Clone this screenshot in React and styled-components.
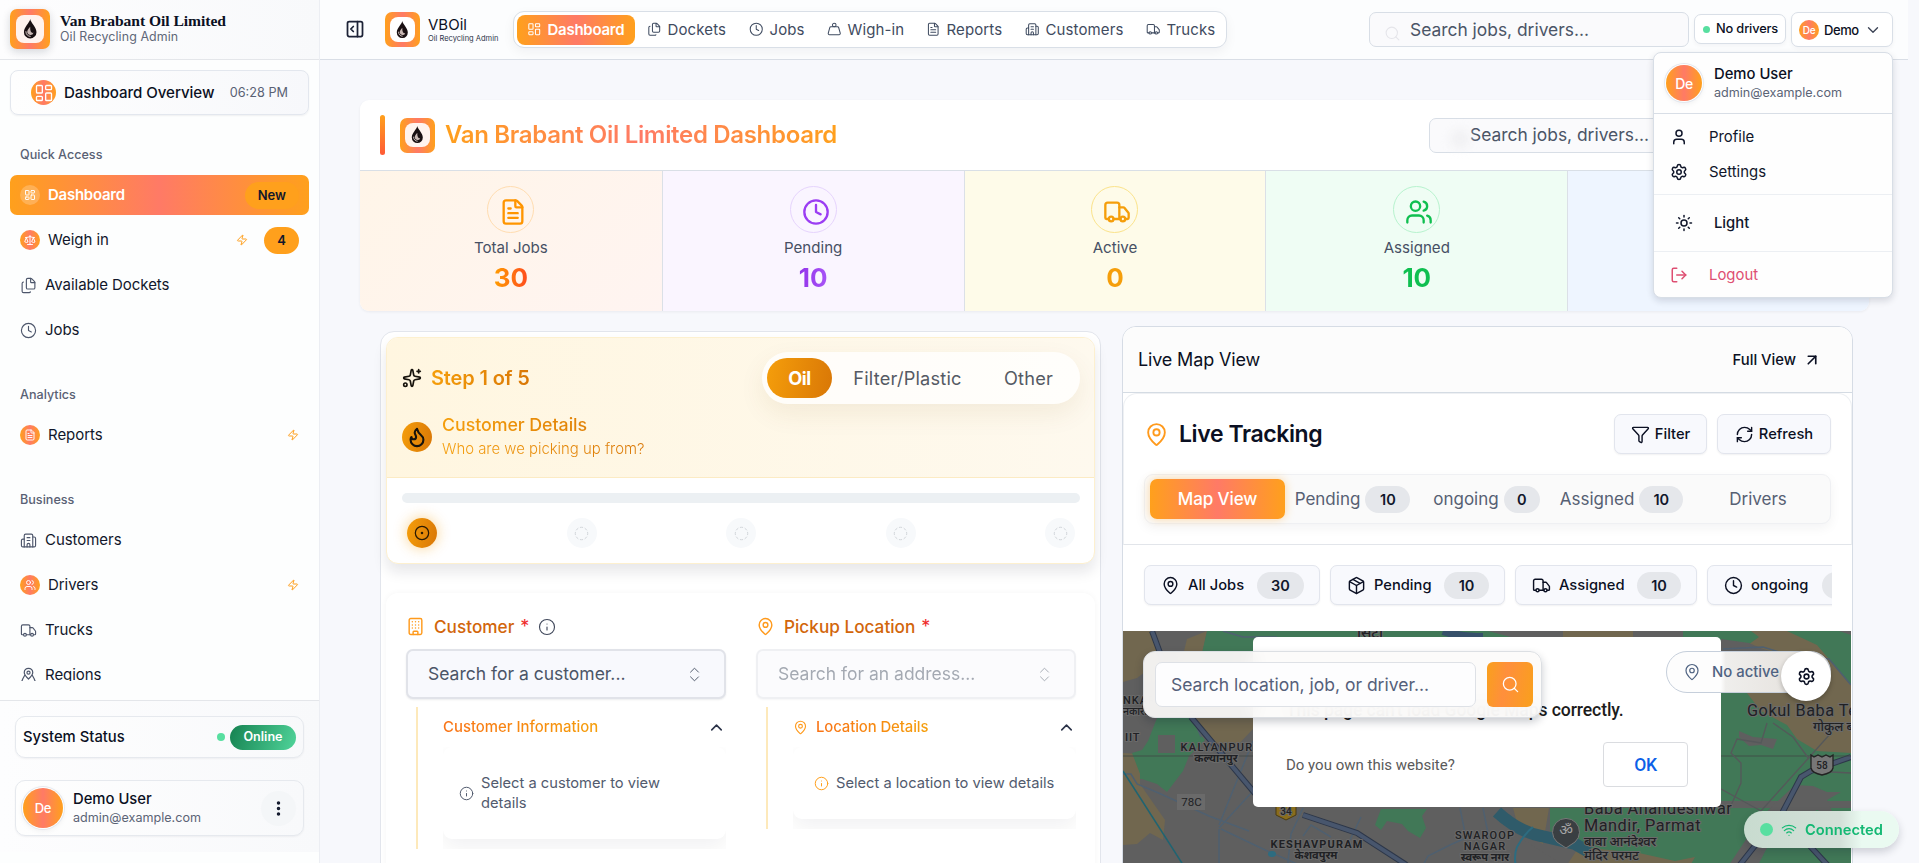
import React from 'react';
import styled, { createGlobalStyle } from 'styled-components';
import {
  LayoutDashboard, Files, Clock, Weight, FileText, Building2, Building, Truck, Users, Zap, Scale,
  PanelRightOpen, Search, ChevronDown, ChevronUp, ChevronsUpDown, User, Settings, Sun, LogOut,
  EllipsisVertical, Sparkles, Flame, CircleDashed, CircleDot, Info, MapPin, Funnel, RefreshCw,
  Package, ArrowUpRight, Wifi,
} from 'lucide-react';

const warm = 'linear-gradient(90deg, #ffa01c 0%, #ff7a66 50%, #ffa01c 100%)';
const amber = 'linear-gradient(100deg, #f59e0b, #d97706)';
const amberText = 'linear-gradient(90deg, #f59e0b, #d97706)';

const Global = createGlobalStyle`
  *, *::before, *::after { box-sizing: border-box; }
  body { margin: 0; background: #f7f8fc; font-family: Inter, 'Noto Sans', sans-serif; color: #0b1023; overflow: hidden; }
  svg { display: block; flex: none; }
`;

const Page = styled.div`
  display: grid;
  grid-template-columns: 320px 1fr;
  height: 863px;
  overflow: hidden;
`;

const Text = styled.span`
  white-space: nowrap;
  font-size: ${p => p.$size || 15}px;
  font-weight: ${p => p.$weight || 400};
  letter-spacing: ${p => p.$ls || 0}px;
  color: ${p => p.$color || 'inherit'};
  line-height: ${p => p.$lh || 20}px;
`;

const GradientText = styled(Text)`
  background: ${p => p.$fill || warm};
  -webkit-background-clip: text;
  background-clip: text;
  color: transparent;
`;

/* Logo */
const LogoFrame = styled.div`
  display: grid;
  place-items: center;
  width: ${p => p.$size}px;
  height: ${p => p.$size}px;
  flex: none;
  border-radius: 7px;
  background: ${warm};
  box-shadow: ${p => (p.$raised ? '0 3px 8px rgba(15, 23, 42, .16)' : 'none')};
`;
const LogoInner = styled.div`
  display: grid;
  place-items: center;
  width: 70%;
  height: 70%;
  border-radius: 8px;
  background: ${p => p.$tint || '#fff3ee'};
`;
function Logo({ size, raised, tint }) {
  return (
    <LogoFrame $size={size} $raised={raised}>
      <LogoInner $tint={tint}>
        <svg width={size * 0.36} height={size * 0.5} viewBox="0 0 16 22">
          <path d="M8 0C7.500 4 1 9 1 14.500a7 7 0 0 0 14 0C15 9 8.500 4 8 0z" fill="#1a1012" />
          <path d="M8 8.500c-2 2.400-3.300 4-3.300 6a3.600 3.600 0 0 0 7 .8c-2.200.8-4-1.500-3.700-6.800z" fill="#c9b8b4" />
          <path d="M3.200 13.500c0 3.500 2.300 5.700 5.300 5.700" stroke="#e8dad6" strokeWidth="1" fill="none" />
        </svg>
      </LogoInner>
    </LogoFrame>
  );
}

/* Sidebar */
const Sidebar = styled.aside`
  display: flex;
  flex-direction: column;
  height: 863px;
  padding-bottom: 11px;
  background: #fdfefe;
  border-right: 1px solid #eceef3;
`;
const Brand = styled.div`
  display: flex;
  align-items: center;
  gap: 10px;
  height: 60px;
  padding: 0 10px 2px;
  background: linear-gradient(90deg, #fdfdfe, #f8f9fb);
  border-bottom: 1px solid #e4e6ea;
`;
const BrandText = styled.div`
  display: flex;
  flex-direction: column;
`;
const BrandName = styled.span`
  font: 700 15.6px/16px 'Liberation Serif', serif;
  letter-spacing: -0.05px;
  white-space: nowrap;
`;
const Overview = styled.div`
  display: flex;
  align-items: center;
  height: 45px;
  margin: 10px 10px 0;
  padding: 0 20px;
  gap: 8px;
  border: 1px solid #e3e7ee;
  border-radius: 8px;
  background: linear-gradient(90deg, #fefefe, #f7f8fb);
  box-shadow: 0 1px 2px rgba(15, 23, 42, .06);
`;
const Disc = styled.span`
  display: grid;
  place-items: center;
  flex: none;
  width: ${p => p.$size}px;
  height: ${p => p.$size}px;
  border-radius: 50%;
  color: #fff;
  background: ${p => p.$bg || warm};
  font-size: ${p => p.$font || 12}px;
  font-weight: 500;
  letter-spacing: -0.3px;
  box-shadow: ${p => (p.$ring ? '0 0 0 1px #fff, 0 0 0 2px #e5e9ef, 0 2px 6px rgba(15,23,42,.08)' : 'none')};
`;
const Time = styled(Text)`margin-left: auto;`;
const NavScroll = styled.nav`
  flex: none;
  height: 566px;
  overflow: hidden;
`;
const NavGroup = styled.div`
  display: flex;
  flex-direction: column;
  gap: 5px;
  padding: 30px 10px 5px;
`;
const NavTitle = styled.div`
  margin: 0 10px 5px;
  font-size: 12.6px;
  line-height: 20px;
  font-weight: 500;
  color: #596174;
`;
const NavItem = styled.div`
  display: flex;
  align-items: center;
  gap: 8px;
  height: 40px;
  padding: 0 10px;
  border-radius: 7px;
  background: ${p => (p.$active ? warm : 'transparent')};
  color: ${p => (p.$active ? '#fff' : '#11172b')};
  & > svg { color: #4d566b; }
`;
const NavEnd = styled.span`
  display: flex;
  align-items: center;
  gap: 16px;
  margin-left: auto;
  color: #ff9f1c;
`;
const NavBadge = styled.span`
  display: grid;
  place-items: center;
  height: 27px;
  padding: 0 13px;
  border-radius: 14px;
  background: #ffa01c;
  color: #11172b;
  font-size: 13px;
  font-weight: 600;
`;
const SideFooter = styled.div`
  display: flex;
  flex-direction: column;
  gap: 22px;
  height: 152px;
  margin-top: auto;
  padding: 15px 15px 0;
  border-top: 1px solid #e4e6ea;
  background: linear-gradient(90deg, #fdfdfe, #f8f9fb);
`;
const StatusCard = styled.div`
  display: flex;
  align-items: center;
  height: ${p => p.$h}px;
  padding: 0 7px;
  border: 1px solid #e6e9ee;
  border-radius: 10px;
  background: linear-gradient(90deg, #fefefe, #f8f9fb);
  box-shadow: 0 1px 2px rgba(15, 23, 42, .05);
`;
const Dot = styled.span`
  flex: none;
  width: ${p => p.$size}px;
  height: ${p => p.$size}px;
  border-radius: 50%;
  background: #58dfa0;
`;
const OnlinePill = styled.span`
  display: grid;
  place-items: center;
  width: 66px;
  height: 25px;
  padding-bottom: 2px;
  border-radius: 13px;
  background: linear-gradient(110deg, #168251, #50d49a);
  color: #fff;
  font-size: 12.6px;
  font-weight: 600;
`;
const StatusEnd = styled.span`
  display: flex;
  align-items: center;
  gap: 5px;
  margin-left: auto;
`;
const UserLines = styled.span`
  display: flex;
  flex-direction: column;
  margin-left: ${p => p.$ml}px;
`;

function RegionIcon() {
  return (
    <svg width="17" height="17" viewBox="0 0 24 24" fill="none" stroke="currentColor" strokeWidth="1.700" strokeLinecap="round" strokeLinejoin="round">
      <path d="M12 17c4-3.800 6-6 6-9.200a6 6 0 0 0-12 0C6 11 8 13.200 12 17z" />
      <circle cx="12" cy="8" r="2.200" />
      <path d="M6.500 12 4 16.500 1.500 23M17.500 12l2.500 4.500L22.500 23" />
    </svg>
  );
}

const sections = [
  ['Quick Access', [
    { label: 'Dashboard', icon: LayoutDashboard, disc: true, active: true, badge: 'New' },
    { label: 'Weigh in', icon: Scale, disc: true, zap: true, badge: '4' },
    { label: 'Available Dockets', icon: Files },
    { label: 'Jobs', icon: Clock },
  ]],
  ['Analytics', [{ label: 'Reports', icon: FileText, disc: true, zap: true }]],
  ['Business', [
    { label: 'Customers', icon: Building2 },
    { label: 'Drivers', icon: Users, disc: true, zap: true },
    { label: 'Trucks', icon: Truck },
    { label: 'Regions', icon: RegionIcon },
  ]],
];

function SideNav() {
  return (
    <NavScroll>
      {sections.map(([title, items]) => (
        <NavGroup key={title}>
          <NavTitle>{title}</NavTitle>
          {items.map(({ label, icon: Icon, disc, active, zap, badge }) => (
            <NavItem key={label} $active={active}>
              {disc
                ? <Disc $size={20} $bg={active ? 'rgba(255,255,255,.22)' : null}><Icon size={12} strokeWidth={1.9} /></Disc>
                : <Icon size={17} strokeWidth={1.6} />}
              <Text $size={15} $ls={active ? -0.25 : -0.05} $weight={active ? 600 : 400}>{label}</Text>
              <NavEnd>
                {zap && <Zap size={12} strokeWidth={2} />}
                {badge && <NavBadge>{badge}</NavBadge>}
              </NavEnd>
            </NavItem>
          ))}
        </NavGroup>
      ))}
    </NavScroll>
  );
}

/* Top bar */
const Main = styled.div`
  min-width: 0;
  height: 863px;
`;
const TopBar = styled.header`
  display: flex;
  align-items: flex-start;
  width: 1588px;
  height: 60px;
  padding: 11px 15px 0 25px;
  background: #fcfdfe;
  border-bottom: 1px solid #d9dee6;
`;
const ToggleSlot = styled.div`
  width: 40px;
  padding-top: 8px;
  color: #1c2236;
`;
const MiniBrand = styled.div`
  display: flex;
  gap: 8px;
  width: 128px;
  padding-top: 1px;
`;
const Tabs = styled.div`
  display: flex;
  gap: 1px;
  width: 714px;
  height: 37px;
  padding: 3px;
  border: 1px solid #d9dfe7;
  border-radius: 11px;
  background: #fff;
  box-shadow: 0 4px 12px rgba(15, 23, 42, .05);
`;
const Tab = styled.div`
  display: flex;
  align-items: center;
  gap: 6px;
  flex: none;
  width: ${p => p.$w}px;
  height: 30px;
  margin-right: ${p => (p.$active ? 1 : 0)}px;
  padding: 0 0 1px 10px;
  border-radius: 8px;
  background: ${p => (p.$active ? warm : 'none')};
  color: ${p => (p.$active ? '#fff' : '#3f4b60')};
`;
const SearchBox = styled.div`
  display: flex;
  align-items: center;
  width: 320px;
  height: 35px;
  flex: none;
  padding-left: ${p => p.$pad}px;
  border: 1px solid #d8dee6;
  border-radius: 7px;
  background: #fafafc;
  color: #4b5567;
`;
const TopSearch = styled(SearchBox)`
  margin: 1px 0 0 142px;
`;
const GhostIcon = styled.span`
  width: 26px;
  padding-top: 8px;
  color: #e5e5ea;
`;
const GhostSpot = styled.span`
  width: 20px;
  height: 20px;
  margin: 8px 0 0 -20px;
  border-radius: 50%;
  background: #f1f1f3;
  filter: blur(5px);
`;
const TopPill = styled.div`
  display: flex;
  align-items: center;
  gap: ${p => p.$gap}px;
  width: ${p => p.$w}px;
  height: ${p => p.$h}px;
  flex: none;
  margin: ${p => p.$m};
  padding-left: ${p => p.$pl}px;
  border: 1px solid #d9dfe7;
  border-radius: 7px;
  background: #fff;
  box-shadow: 0 2px 4px rgba(15, 23, 42, .04);
`;
const UserArea = styled.div`position: relative;`;
const Menu = styled.div`
  position: absolute;
  z-index: 20;
  right: 0;
  top: 41px;
  width: 240px;
  height: 246px;
  border: 1px solid #d8dee6;
  border-radius: 8px;
  background: #fefefe;
  box-shadow: 0 3px 7px rgba(15, 23, 42, .14);
`;
const MenuGroup = styled.div`
  display: flex;
  flex-direction: column;
  justify-content: center;
  height: ${p => p.$h}px;
  border-bottom: ${p => (p.$line ? `1px solid ${p.$line}` : 'none')};
`;
const MenuRow = styled.div`
  display: flex;
  align-items: center;
  height: 35px;
  gap: 21px;
  padding-left: ${p => p.$pl || 16}px;
  color: ${p => p.$color || '#11172b'};
`;
const MenuUser = styled.div`
  display: flex;
  align-items: center;
  padding-left: 12px;
`;

const topTabs = [
  ['Dashboard', LayoutDashboard, 118], ['Dockets', Files, 101], ['Jobs', Clock, 77], ['Wigh-in', Weight, 98],
  ['Reports', FileText, 98], ['Customers', Building2, 120], ['Trucks', Truck, 87],
];

function Header() {
  return (
    <TopBar>
      <ToggleSlot><PanelRightOpen size={20} strokeWidth={2.1} /></ToggleSlot>
      <MiniBrand>
        <Logo size={35} tint="#fff" />
        <BrandText>
          <Text $size={15} $lh={25}>VBOil</Text>
          <Text $size={7.5} $lh={3} $color="#2b3348">Oil Recycling Admin</Text>
        </BrandText>
      </MiniBrand>
      <Tabs>
        {topTabs.map(([label, Icon, w], i) => (
          <Tab key={label} $w={w} $active={i === 0}>
            <Icon size={14.5} strokeWidth={1.7} />
            <Text $size={15} $weight={i === 0 ? 600 : 400} $ls={i === 0 ? -0.25 : 0.12}>{label}</Text>
          </Tab>
        ))}
      </Tabs>
      <TopSearch $pad={14}>
        <GhostIcon><Search size={17} strokeWidth={1.5} /></GhostIcon>
        <Text $size={17.4}>Search jobs, drivers...</Text>
      </TopSearch>
      <TopPill $w={92} $h={30} $gap={6} $pl={8} $m="3px 5px 0 5px">
        <Dot $size={7} />
        <Text $size={12.8} $weight={500} $ls={-0.15}>No drivers</Text>
      </TopPill>
      <UserArea>
        <TopPill $w={102} $h={35} $gap={5} $pl={7} $m="1px 0 0 0">
          <Disc $size={20} $font={10}>De</Disc>
          <Text $size={13} $weight={500} $ls={-0.4}>Demo</Text>
          <ChevronDown size={18} strokeWidth={1.8} color="#3c4355" />
        </TopPill>
        <Menu>
          <MenuGroup $h={61} $line="#d8dee6">
            <MenuUser>
              <Disc $size={36} $font={14} $ring>De</Disc>
              <UserLines $ml={12}>
                <Text $size={14.8} $weight={500}>Demo User</Text>
                <Text $size={12.6} $color="#5b6476" $lh={18}>admin@example.com</Text>
              </UserLines>
            </MenuUser>
          </MenuGroup>
          <MenuGroup $h={81} $line="#eceff3">
            <MenuRow><User size={18} /><Text $size={14.9}>Profile</Text></MenuRow>
            <MenuRow><Settings size={18} /><Text $size={14.9}>Settings</Text></MenuRow>
          </MenuGroup>
          <MenuGroup $h={57} $line="#eceff3">
            <MenuRow $pl={21}><Sun size={18} /><Text $size={14.8} $weight={500}>Light</Text></MenuRow>
          </MenuGroup>
          <MenuGroup $h={46}>
            <MenuRow $color="#de4f72"><LogOut size={18} /><Text $size={14.9}>Logout</Text></MenuRow>
          </MenuGroup>
        </Menu>
      </UserArea>
    </TopBar>
  );
}

/* Summary panel */
const Summary = styled.section`
  width: 1509px;
  height: 211px;
  margin: 40px 0 0 40px;
  border-radius: 9px;
  overflow: hidden;
  background: #fff;
  box-shadow: 0 1px 3px rgba(15, 23, 42, .06);
`;
const SummaryHead = styled.div`
  display: flex;
  align-items: center;
  height: 71px;
  padding: 0 120px 0 20px;
  border-bottom: 1px solid #d9dfe6;
`;
const Accent = styled.span`
  width: 5px;
  height: 40px;
  margin-right: 15px;
  border-radius: 3px;
  background: linear-gradient(#ffa01c, #ff5a36);
`;
const SummaryTitle = styled(GradientText)`margin: 0 auto 0 10px;`;
const Stats = styled.div`
  display: grid;
  grid-template-columns: repeat(5, 1fr);
  height: 140px;
`;
const Stat = styled.div`
  display: flex;
  flex-direction: column;
  align-items: center;
  padding-top: 15px;
  background: ${p => p.$bg};
  border-left: ${p => (p.$first ? 'none' : '1px solid #dbe0e7')};
  color: ${p => p.$color};
`;
const StatRing = styled.span`
  display: grid;
  place-items: center;
  width: 47px;
  height: 47px;
  padding: 5px 0 0 5px;
  border: 1px solid ${p => p.$ring};
  border-radius: 50%;
`;
const stats = [
  ['Total Jobs', '30', FileText, 'linear-gradient(135deg,#fff5e8,#fff4f1)', '#ff9500', '#ffdcb0', 'linear-gradient(90deg,#ff9d00,#ff4b1e)'],
  ['Pending', '10', Clock, '#faf5ff', '#9b3df3', '#e6d4fd', 'linear-gradient(90deg,#9333ea,#a855f7)'],
  ['Active', '0', Truck, '#fefbe9', '#f59e0b', '#fbe38b', 'linear-gradient(90deg,#f59e0b,#f59e0b)'],
  ['Assigned', '10', Users, '#effdf4', '#0fbf50', '#b7f3ce', 'linear-gradient(90deg,#0fbf50,#0fbf50)'],
];

function SummaryPanel() {
  return (
    <Summary>
      <SummaryHead>
        <Accent />
        <Logo size={35} />
        <SummaryTitle $size={24} $weight={600} $ls={-0.32} $lh={30}>Van Brabant Oil Limited Dashboard</SummaryTitle>
        <SearchBox $pad={40}><GhostSpot /><Text $size={17.4}>Search jobs, drivers...</Text></SearchBox>
      </SummaryHead>
      <Stats>
        {stats.map(([label, n, Icon, bg, color, ring, fill], i) => (
          <Stat key={label} $bg={bg} $color={color} $first={i === 0}>
            <StatRing $ring={ring}><Icon size={28} strokeWidth={2} /></StatRing>
            <Text $size={15.1} $lh={30} $color="#475064">{label}</Text>
            <GradientText $size={26} $weight={700} $lh={30} $fill={fill}>{n}</GradientText>
          </Stat>
        ))}
        <Stat $bg="#eef5ff" />
      </Stats>
    </Summary>
  );
}

/* Pickup form */
const Columns = styled.div`
  display: flex;
  align-items: flex-start;
  gap: 21px;
  padding: 15px 0 0 60px;
`;
const FormCard = styled.section`
  width: 721px;
  height: 560px;
  margin-top: 5px;
  padding: 5px;
  border: 1px solid #e2e5ec;
  border-radius: 14px;
  background: #fff;
`;
const Stepper = styled.div`
  height: 227px;
  border: 1px solid #fdf0cf;
  border-radius: 12px;
  overflow: hidden;
  background: #fff;
  box-shadow: 0 8px 14px rgba(15, 23, 42, .10);
`;
const StepHead = styled.div`
  height: 140px;
  padding: 14px 14px 0 15px;
  border-bottom: 1px solid #fcebc4;
  background: linear-gradient(90deg, #fff6e0, #fef9ee);
`;
const Row = styled.div`
  display: flex;
  align-items: center;
  gap: ${p => p.$gap || 0}px;
`;
const Kinds = styled.div`
  display: flex;
  align-items: center;
  width: 318px;
  height: 52px;
  margin-left: auto;
  padding-left: 5px;
  border-radius: 26px;
  background: rgba(255, 255, 255, .75);
  box-shadow: 0 10px 26px rgba(120, 80, 0, .08);
`;
const Kind = styled.span`
  display: grid;
  place-items: center;
  width: ${p => p.$w}px;
  height: 40px;
  border-radius: 20px;
  font-size: 18.2px;
  font-weight: ${p => (p.$active ? 700 : 400)};
  letter-spacing: ${p => (p.$active ? -0.4 : 0.2)}px;
  color: ${p => (p.$active ? '#fff' : '#555a64')};
  background: ${p => (p.$active ? amber : 'none')};
`;
const StepInfo = styled.div`
  display: flex;
  align-items: center;
  gap: 10px;
  margin-top: 9px;
`;
const StepLines = styled.div`
  display: flex;
  flex-direction: column;
`;
const Progress = styled.div`
  height: 10px;
  margin: 15px 14px 0 15px;
  border-radius: 5px;
  background: #ecf0f3;
`;
const Steps = styled.div`
  display: flex;
  justify-content: space-between;
  padding: 15px 19px 0 20px;
`;
const Step = styled.span`
  display: grid;
  place-items: center;
  width: 30px;
  height: 30px;
  border-radius: 50%;
  color: ${p => (p.$active ? '#2b1a02' : '#d0d4d9')};
  background: ${p => (p.$active ? amber : '#f7f9fb')};
  box-shadow: ${p => (p.$active ? '0 0 14px rgba(245, 158, 11, .45)' : 'none')};
`;
const Fields = styled.div`
  display: grid;
  grid-template-columns: 320px 320px;
  gap: 30px;
  height: 300px;
  margin-top: 29px;
  padding: 22px 0 0 20px;
  border-radius: 12px;
  background: #fff;
  box-shadow: 0 0 6px rgba(15, 23, 42, .04);
`;
const FieldLabel = styled.div`
  display: flex;
  align-items: center;
  gap: 9px;
  height: 24px;
  padding-bottom: 1px;
  color: #ff9a1c;
`;
const Star = styled.span`
  color: #ef2b2b;
  font-size: 18px;
  margin-left: -3px;
`;
const Picker = styled.div`
  display: flex;
  align-items: center;
  justify-content: space-between;
  height: 50px;
  margin-top: 10px;
  padding: 0 20px;
  border: 2px solid #e1e3e9;
  border-radius: 7px;
  background: #f8f9fd;
  color: #4b5567;
  opacity: ${p => (p.$dim ? 0.5 : 1)};
  box-shadow: 0 1px 2px rgba(15, 23, 42, .08);
`;
const Details = styled.div`
  height: ${p => p.$h}px;
  margin: 8px 0 0 10px;
  padding-left: 25px;
  border-left: 2px solid #fde9bb;
`;
const DetailsHead = styled.div`
  display: flex;
  align-items: center;
  gap: 8px;
  height: 40px;
  color: #ff9a1c;
  & > :last-child { margin-left: auto; color: #2b3348; }
`;
const DetailsClip = styled.div`
  height: ${p => p.$h}px;
  overflow: hidden;
`;
const Hint = styled.div`
  display: flex;
  align-items: center;
  gap: 7px;
  height: ${p => p.$h}px;
  padding-left: ${p => p.$pl}px;
  border-radius: 9px;
  background: #fff;
  box-shadow: 0 8px 22px rgba(15, 23, 42, .06);
  font-size: 14.7px;
  line-height: 20px;
  color: #525b6e;
`;
const HintText = styled.span`
  width: ${p => p.$w}px;
`;

function PickupForm() {
  return (
    <FormCard>
      <Stepper>
        <StepHead>
          <Row $gap={9}>
            <Sparkles size={20} color="#17130c" />
            <GradientText $size={20} $weight={600} $fill={amberText} $ls={-0.15} $lh={26}>Step 1 of 5</GradientText>
            <Kinds>
              <Kind $w={65} $active>Oil</Kind>
              <Kind $w={151}>Filter/Plastic</Kind>
              <Kind $w={91}>Other</Kind>
            </Kinds>
          </Row>
          <StepInfo>
            <Disc $size={30} $bg={amber}><Flame size={22} color="#17130c" strokeWidth={2.3} /></Disc>
            <StepLines>
              <GradientText $size={17.8} $fill={amberText} $weight={500} $lh={24} $ls={-0.05}>Customer Details</GradientText>
              <GradientText $size={14.9} $fill={amberText} $weight={300} $lh={24}>Who are we picking up from?</GradientText>
            </StepLines>
          </StepInfo>
        </StepHead>
        <Progress />
        <Steps>
          <Step $active><CircleDot size={16} strokeWidth={1.9} /></Step>
          {[2, 3, 4, 5].map(n => <Step key={n}><CircleDashed size={15} strokeWidth={1.5} /></Step>)}
        </Steps>
      </Stepper>
      <Fields>
        <div>
          <FieldLabel>
            <Building size={19} strokeWidth={1.8} />
            <Text $size={17.2} $weight={500} $color="#d2660b">Customer</Text>
            <Star>*</Star>
            <Info size={18} color="#3f475a" strokeWidth={1.5} />
          </FieldLabel>
          <Picker><Text $size={17.5}>Search for a customer...</Text><ChevronsUpDown size={19} strokeWidth={1.2} /></Picker>
          <Details $h={142}>
            <DetailsHead>
              <GradientText $size={14.9} $weight={500} $ls={0} $fill="linear-gradient(90deg,#f97316,#f59e0b)">Customer Information</GradientText>
              <ChevronUp size={19} />
            </DetailsHead>
            <DetailsClip $h={102}>
              <Hint $h={92} $pl={16}><Info size={15} strokeWidth={1.6} /><HintText $w={200}>Select a customer to view details</HintText></Hint>
            </DetailsClip>
          </Details>
        </div>
        <div>
          <FieldLabel>
            <MapPin size={19} strokeWidth={1.8} />
            <Text $size={17.2} $weight={500} $color="#d2660b">Pickup Location</Text>
            <Star>*</Star>
          </FieldLabel>
          <Picker $dim><Text $size={17.5}>Search for an address...</Text><ChevronsUpDown size={19} strokeWidth={1.2} /></Picker>
          <Details $h={122}>
            <DetailsHead>
              <MapPin size={15} strokeWidth={1.8} />
              <GradientText $size={14.9} $weight={500} $ls={-0.1} $fill="linear-gradient(90deg,#f97316,#f59e0b)">Location Details</GradientText>
              <ChevronUp size={19} />
            </DetailsHead>
            <DetailsClip $h={82}>
              <Hint $h={72} $pl={21}><Info size={15} strokeWidth={1.6} color="#ffa01c" /><HintText $w={230}>Select a location to view details</HintText></Hint>
            </DetailsClip>
          </Details>
        </div>
      </Fields>
    </FormCard>
  );
}

/* Live map */
const MapCard = styled.section`
  width: 731px;
  height: 560px;
  border: 1px solid #d6dce5;
  border-radius: 14px;
  overflow: hidden;
  background: #fff;
`;
const MapHead = styled.div`
  display: flex;
  align-items: center;
  justify-content: space-between;
  height: 66px;
  padding: 0 31px 0 15px;
  border-bottom: 1px solid #d4dbe3;
  background: #fcfcfc;
`;
const Tracking = styled.div`
  height: 152px;
  padding: 20px 20px 0;
  border: 1px solid #eef0f3;
  border-bottom-color: #e2e5ea;
  border-radius: 14px 14px 0 0;
`;
const Grow = styled.span`flex: 1;`;
const OutlineButton = styled.span`
  display: flex;
  align-items: center;
  justify-content: center;
  gap: 5px;
  width: ${p => p.$w}px;
  height: 40px;
  border: 1px solid #e2e5ed;
  border-radius: 7px;
  background: #f8f9fd;
  box-shadow: 0 1px 2px rgba(15, 23, 42, .06);
`;
const MapTabs = styled.div`
  display: flex;
  align-items: center;
  height: 50px;
  margin-top: 20px;
  padding-left: 5px;
  border: 1px solid #eff0f3;
  border-radius: 9px;
  background: #fafafa;
  box-shadow: 0 4px 12px rgba(15, 23, 42, .05);
`;
const MapTab = styled.span`
  display: flex;
  align-items: center;
  justify-content: center;
  gap: 5px;
  width: ${p => p.$w}px;
  height: 40px;
  border-radius: 7px;
  color: ${p => (p.$active ? '#fff' : '#566073')};
  background: ${p => (p.$active ? warm : 'none')};
  box-shadow: ${p => (p.$active ? '0 0 10px rgba(255, 160, 28, .4)' : 'none')};
`;
const Count = styled.span`
  display: grid;
  place-items: center;
  flex: none;
  width: ${p => p.$w}px;
  height: 27px;
  border-radius: 14px;
  background: #e5e7eb;
  color: #11172b;
  font-size: 14.5px;
  font-weight: 600;
`;
const Chips = styled.div`
  display: flex;
  gap: 10px;
  height: 86px;
  margin: 0 20px;
  padding: 20px 0 0 1px;
  overflow: hidden;
`;
const Chip = styled.span`
  display: flex;
  align-items: center;
  flex: none;
  width: ${p => p.$w}px;
  height: 40px;
  padding: 0 15px 0 16px;
  border: 1px solid #e2e5ed;
  border-radius: 7px;
  background: #f8f9fd;
  box-shadow: 0 1px 2px rgba(15, 23, 42, .06);
  gap: 8px;
  & > :last-child { margin-left: auto; }
`;
const MapArea = styled.div`
  position: relative;
  width: 728px;
  height: 240px;
`;
const MapDialog = styled.div`
  position: absolute;
  left: 130px;
  top: 6px;
  width: 468px;
  height: 170px;
  padding: 61px 33px 0;
  border-radius: 5px;
  background: #fff;
  font-family: Roboto, sans-serif;
`;
const DialogFoot = styled.div`
  display: flex;
  align-items: center;
  justify-content: space-between;
  margin-top: 20px;
  font-size: 15px;
  color: #5a5a5a;
`;
const OkButton = styled.span`
  display: grid;
  place-items: center;
  width: 85px;
  height: 45px;
  border: 1px solid #dadce0;
  border-radius: 4px;
  font-size: 17.5px;
  font-weight: 500;
  letter-spacing: -0.3px;
  color: #0b5fe8;
`;
const DialogMessage = styled.div`
  font-size: 17.6px;
  font-weight: 500;
  line-height: 24px;
  letter-spacing: -0.1px;
  white-space: nowrap;
  color: #1c1c1c;
`;
const MapSearch = styled.div`
  position: absolute;
  left: 20px;
  top: 20px;
  display: flex;
  gap: 11px;
  width: 399px;
  height: 67px;
  padding: 10px 0 0 11px;
  border: 1px solid #dcdfe3;
  border-radius: 12px;
  background: rgba(252, 251, 250, .93);
  backdrop-filter: blur(10px);
  box-shadow: 0 4px 9px rgba(15, 23, 42, .22);
`;
const MapInput = styled.span`
  display: flex;
  align-items: center;
  width: 321px;
  height: 45px;
  padding-left: 15px;
  border: 1px solid #dee1e6;
  border-radius: 7px;
  background: #fdfdfe;
  color: #55607a;
`;
const SearchButton = styled.span`
  display: grid;
  place-items: center;
  width: 46px;
  height: 45px;
  border-radius: 6px;
  color: #fff;
  background: linear-gradient(100deg, #f9a01c, #ff8f3c 40%, #f9a01c);
`;
const ActivePill = styled.div`
  position: absolute;
  left: 543px;
  top: 20px;
  display: flex;
  align-items: center;
  gap: 11px;
  width: 165px;
  height: 42px;
  padding-left: 16px;
  border: 1px solid #c6cfdb;
  border-radius: 21px;
  background: linear-gradient(90deg, #fdfdfd 0 33%, #efeeec 36%, #e8e5e1 70%);
  color: #4f6382;
`;
const Gear = styled.div`
  position: absolute;
  left: 658px;
  top: 20px;
  display: grid;
  place-items: center;
  width: 50px;
  height: 50px;
  border-radius: 50%;
  background: #fff;
  box-shadow: 0 2px 5px rgba(0, 0, 0, .25);
`;
const Connected = styled.div`
  position: fixed;
  z-index: 30;
  left: 1744px;
  top: 811px;
  display: flex;
  align-items: center;
  gap: 8px;
  width: 155px;
  height: 37px;
  padding-left: 16px;
  border-radius: 19px;
  background: linear-gradient(90deg, #c8dbcf 0, #d3e0d8 62%, #eafaf1 76%);
  box-shadow: 0 4px 8px rgba(15, 23, 42, .18);
  color: #13b873;
`;

const MapLabel = styled.text`
  font-family: Roboto, 'Noto Sans', sans-serif;
  font-size: ${p => p.$size || 11}px;
  font-weight: ${p => p.$weight || 500};
  letter-spacing: ${p => p.$ls || 0}px;
  fill: #202124;
  stroke: #6a6a6a;
  stroke-width: 2px;
  paint-order: stroke;
  text-anchor: ${p => p.$anchor || 'middle'};
`;

function MapDrawing() {
  return (
    <svg width="728" height="240" viewBox="0 0 728 240">
      <rect width="728" height="240" fill="#5f5f5f" />
      <g fill="#71674f">
        <path d="M0 0h28l6 20-8 18-12 9-14 4z" />
        <path d="M64 8 84 0l-5 24H60z" />
        <path d="M62 86h68v12l-20 21-23-10z" />
        <path d="M0 122l17 1v30l25 36-2 20-13-7-13 11-14 1z" />
      </g>
      <g fill="#417857">
        <path d="M84 0h71v22H79z" />
        <path d="M125 0h240l30 8H125zM427 170h301V0H560v170z" />
        <path d="M427 177h301v63H500l-40-26-33-14z" />
        <path d="M34 87h34l8 15 6 7-16 16-6 15-16 21-10-8-15-5-10-26 10-3 6-9z" />
        <path d="M17 137h6v11h-6zM258 178h46l-5 7 4 12-6 10-12-7-6-7-15-3-6 9-6-5z" />
      </g>
      <g fill="#71674f">
        <path d="M390 177h36l-6 36-24-14zM456 216l60 6 36 8 20-4-8 14H440z" />
        <path d="M440 0h70v6h-70zM628 0h36l30 14 34 40v68l-34-2-20-12-10-14-26-14-22-28 6-36 14-10z" />
      </g>
      <g fill="#5f5f5f">
        <path d="M35 104h17v18H35z" />
        <path d="M598 8l28 4 14 6 30 8-20 4-22 4-30-8zM716 0h12v4z" />
        <path d="M616 100l14 6 24 2-4 10-12-4-12 1-10-9z" />
        <path d="M690 155l14 6 14 0-14 8 8 18-18-8-14 8-12 14-20 8-16 31h-30l36-54 34-32z" />
        <path d="M376 240v-34l20 0 44 28v6z" />
      </g>
      <path d="M374 181q22 20 44 24l34 8 14 8" stroke="#2f5b6a" strokeWidth="12" fill="none" />
      <g fill="none" stroke="#4f6070" strokeWidth="1.500">
        <path d="M0 143l8 0 6 10 24 10 48 22 40 15M130 160l-34 37M98 198l42 20 50 22M96 198l0 42M130 110l-34 84M180 177l-12 26-4 37M238 186l-12 25M180 205l8-11 20 12M337 177l6 30 -14 6-24 12-8 15M360 177l6 30M70 86l8 20" />
        <path d="M100 0l20 6h34M600 18l40-2 26 8 40 4 22 26" />
      </g>
      <path d="M29 0 40 30M68 86l72 86M180 184l54 18 48 31 12 10M728 126l-40 14-10 6-22 42-14 14-30 38M686 214l24 26" fill="none" stroke="#2d3749" strokeWidth="6" />
      <path d="M29 0 40 30M68 86l72 86M180 184l54 18 48 31 12 10M728 126l-40 14-10 6-22 42-14 14-30 38M686 214l24 26" fill="none" stroke="#48566d" strokeWidth="4" />
      <path d="M320 0q16 6 40 6" stroke="#36506a" strokeWidth="8" fill="none" />
      <path d="M0 140l64 100" stroke="#1f6472" strokeWidth="1.500" />
      <path d="M394 240q-4-14 0-24 8-14 16-20" stroke="#2d6c80" strokeWidth="2" fill="none" />
      <ellipse cx="149" cy="223" rx="4" ry="3" fill="#2d6c80" />
      <path d="M0 125h728" stroke="#3f4744" strokeWidth=".8" />
      <g fill="none" stroke="#55585a" strokeWidth="1.300">
        <path d="M644 92l-6 20-24-4-6 14 10 10v20l-8 18-6 14M598 158l40 22 70-78M650 92l20 14 16 22M688 140l40 2" />
      </g>
      <MapLabel x="247" y="7" $size={15}>सिटी</MapLabel>
      <MapLabel x="0" y="73" $anchor="start" $ls={1}>NKARI</MapLabel>
      <MapLabel x="0" y="84" $anchor="start" $size={10.5}>नकारी</MapLabel>
      <MapLabel x="2" y="110" $anchor="start" $ls={0.8}>IIT</MapLabel>
      <MapLabel x="94" y="120" $ls={1.3}>KALYANPUR</MapLabel>
      <MapLabel x="93" y="131" $size={11} $weight={700}>कल्यानपुर</MapLabel>
      <rect x="54" y="163" width="28" height="16" fill="#6a6a6a" />
      <MapLabel x="68.500" y="175" $size={11.5} $weight={400}>78C</MapLabel>
      <MapLabel x="194" y="217" $ls={1.15} $weight={700}>KESHAVPURAM</MapLabel>
      <MapLabel x="193" y="228" $size={11} $weight={700}>केशवपुरम</MapLabel>
      <MapLabel x="362" y="208" $ls={1.1}>SWAROOP</MapLabel>
      <MapLabel x="362" y="219" $ls={1.1}>NAGAR</MapLabel>
      <MapLabel x="362" y="230" $size={11} $weight={700}>स्वरूप नगर</MapLabel>
      <path d="M153 174h20v10l-10 5-10-5z" fill="#8a6d1c" stroke="#4a3b12" />
      <MapLabel x="163" y="184" $size={10}>34</MapLabel>
      <path d="M443 217l-9-6a13.500 13.500 0 1 1 18 0z" fill="#3a3f42" stroke="#777" strokeWidth="1" />
      <text x="443" y="204" fontSize="15" fill="#a5a5a5" textAnchor="middle">ॐ</text>
      <MapLabel x="461" y="183" $anchor="start" $size={16.3} $weight={400} $ls={0.5}>Baba Anandeshwar</MapLabel>
      <MapLabel x="461" y="200" $anchor="start" $size={16.3} $weight={400} $ls={0.5}>Mandir, Parmat</MapLabel>
      <MapLabel x="461" y="215" $anchor="start" $size={13}>बाबा आनंदेश्वर</MapLabel>
      <MapLabel x="461" y="229" $anchor="start" $size={13}>मंदिर परमट</MapLabel>
      <MapLabel x="624" y="85" $anchor="start" $size={16.3} $weight={400} $ls={0.5}>Gokul Baba Temple</MapLabel>
      <MapLabel x="690" y="100" $anchor="start" $size={13}>गोकुल बाबा</MapLabel>
      <path d="M688 124l3 2 4-2 4 2 4-2 4 2 3-2v13q-1 5-11 7-10-2-11-7z" fill="#777" stroke="#222" strokeWidth="1.300" />
      <text x="699" y="138" fontSize="10" fontFamily="Roboto, sans-serif" fontWeight="500" textAnchor="middle" fill="#202124">58</text>
    </svg>
  );
}

const chips = [
  ['All Jobs', '30', MapPin, 176, 47], ['Pending', '10', Package, 175, 45],
  ['Assigned', '10', Truck, 182, 44], ['ongoing', '0', Clock, 168, 37],
];

function LiveMap() {
  return (
    <MapCard>
      <MapHead>
        <Text $size={18} $ls={-0.15}>Live Map View</Text>
        <Row $gap={7}><Text $size={14.8} $weight={500}>Full View</Text><ArrowUpRight size={18} strokeWidth={2.2} /></Row>
      </MapHead>
      <Tracking>
        <Row $gap={10}>
          <MapPin size={25} color="#ff9a1c" strokeWidth={1.8} />
          <Text $size={23} $weight={600} $ls={-0.4}>Live Tracking</Text>
          <Grow />
          <OutlineButton $w={93}><Funnel size={19} strokeWidth={1.8} /><Text $size={14.7} $weight={500}>Filter</Text></OutlineButton>
          <OutlineButton $w={114}><RefreshCw size={19} strokeWidth={1.8} /><Text $size={14.7} $weight={500}>Refresh</Text></OutlineButton>
        </Row>
        <MapTabs>
          <MapTab $w={135} $active><Text $size={17} $weight={500} $ls={-0.1}>Map View</Text></MapTab>
          <MapTab $w={135}><Text $size={17}>Pending</Text><Count $w={45}>10</Count></MapTab>
          <MapTab $w={133}><Text $size={17}>ongoing</Text><Count $w={36}>0</Count></MapTab>
          <MapTab $w={137}><Text $size={17}>Assigned</Text><Count $w={44}>10</Count></MapTab>
          <MapTab $w={136}><Text $size={17}>Drivers</Text></MapTab>
        </MapTabs>
      </Tracking>
      <Chips>
        {chips.map(([label, n, Icon, w, bw]) => (
          <Chip key={label} $w={w}>
            <Icon size={19} strokeWidth={1.8} />
            <Text $size={14.7} $weight={500}>{label}</Text>
            <Count $w={bw}>{n}</Count>
          </Chip>
        ))}
      </Chips>
      <MapArea>
        <MapDrawing />
        <MapDialog>
          <DialogMessage>This page can't load Google Maps correctly.</DialogMessage>
          <DialogFoot><span>Do you own this website?</span><OkButton>OK</OkButton></DialogFoot>
        </MapDialog>
        <MapSearch>
          <MapInput><Text $size={17.5}>Search location, job, or driver...</Text></MapInput>
          <SearchButton><Search size={19} strokeWidth={1.6} /></SearchButton>
        </MapSearch>
        <ActivePill><MapPin size={18} strokeWidth={1.6} /><Text $size={14.9} $weight={500}>No active</Text></ActivePill>
        <Gear><Settings size={19} /></Gear>
      </MapArea>
    </MapCard>
  );
}

export default function App() {
  return (
    <>
      <Global />
      <Page>
        <Sidebar>
          <Brand>
            <Logo size={40} raised />
            <BrandText>
              <BrandName>Van Brabant Oil Limited</BrandName>
              <Text $size={12.4} $lh={15} $ls={0.1} $color="#5f6778">Oil Recycling Admin</Text>
            </BrandText>
          </Brand>
          <Overview>
            <Disc $size={25}><LayoutDashboard size={20} strokeWidth={1.6} /></Disc>
            <Text $size={15.1} $weight={500} $ls={-0.05}>Dashboard Overview</Text>
            <Time $size={12.7} $color="#596174">06:28 PM</Time>
          </Overview>
          <SideNav />
          <SideFooter>
            <StatusCard $h={42}>
              <Text $size={14.8} $weight={500}>System Status</Text>
              <StatusEnd><Dot $size={8} /><OnlinePill>Online</OnlinePill></StatusEnd>
            </StatusCard>
            <StatusCard $h={56}>
              <Disc $size={40} $font={13} $ring>De</Disc>
              <UserLines $ml={10}>
                <Text $size={14.8} $weight={500}>Demo User</Text>
                <Text $size={12.6} $lh={18} $color="#5b6476">admin@example.com</Text>
              </UserLines>
              <StatusEnd><Disc $size={35} $bg="#f4f6f8"><EllipsisVertical size={19} color="#11172b" strokeWidth={2.4} /></Disc></StatusEnd>
            </StatusCard>
          </SideFooter>
        </Sidebar>
        <Main>
          <Header />
          <SummaryPanel />
          <Columns>
            <PickupForm />
            <LiveMap />
          </Columns>
        </Main>
      </Page>
      <Connected>
        <Dot $size={13} />
        <Wifi size={16} strokeWidth={1.8} />
        <Text $size={14.7} $weight={600}>Connected</Text>
      </Connected>
    </>
  );
}
